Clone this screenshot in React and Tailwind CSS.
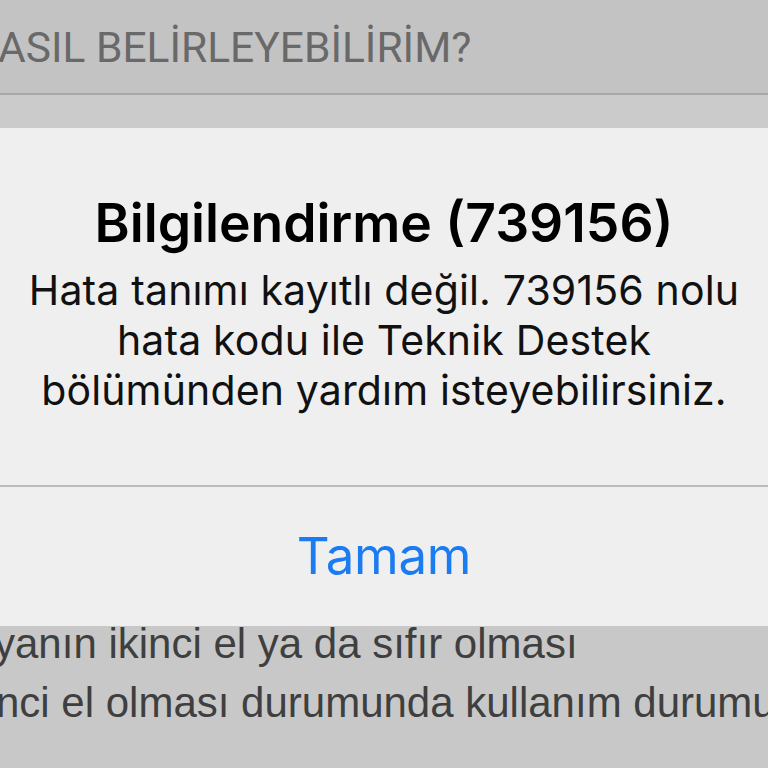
import React from 'react'

const sf = { fontFamily: 'Inter, "Noto Sans", sans-serif' }

export default function App() {
  return (
    <div className="w-[768px] h-[768px] overflow-hidden flex flex-col bg-[#c8c8c8]">
      {/* page behind the alert */}
      <div className="h-[93px] bg-[#c3c3c3] pt-[27px] shrink-0">
        <div className="ml-[-2px] whitespace-nowrap text-[42.5px] leading-[42px] text-[#696969] font-['Roboto',sans-serif]">
          ASIL BELİRLEYEBİLİRİM?
        </div>
      </div>
      <div className="h-[2px] bg-[#a9a9a9] shrink-0" />
      <div className="h-[33px] bg-[#cbcbcb] shrink-0" />

      {/* alert */}
      <div className="h-[498px] bg-[#efefef] flex flex-col shrink-0" style={sf}>
        <div className="h-[357px] pt-[65px] flex flex-col items-center text-center">
          <div className="text-[53.4px] leading-[60px] font-semibold text-black">
            Bilgilendirme (739156)
          </div>
          <div className="mt-[12px] text-[41px] leading-[50px] text-[#111] tracking-[0.15px]">
            <div>Hata tanımı kayıtlı değil. 739156 nolu</div>
            <div>hata kodu ile Teknik Destek</div>
            <div>bölümünden yardım isteyebilirsiniz.</div>
          </div>
        </div>
        <div className="h-[2px] bg-[#bcbcbc]" />
        <div className="flex-1 flex items-center justify-center">
          <span className="text-[51px] text-[#1a7cf0] tracking-[-0.3px]">Tamam</span>
        </div>
      </div>

      <div className="mt-[-12px] font-['Liberation_Sans',Arial,sans-serif] text-[42px] leading-[59px] text-[#3f3f3f] whitespace-nowrap">
        <div className="ml-[-6px]">yanın ikinci el ya da sıfır olması</div>
        <div className="ml-[-4px]">nci el olması durumunda kullanım durumu</div>
      </div>
    </div>
  )
}
